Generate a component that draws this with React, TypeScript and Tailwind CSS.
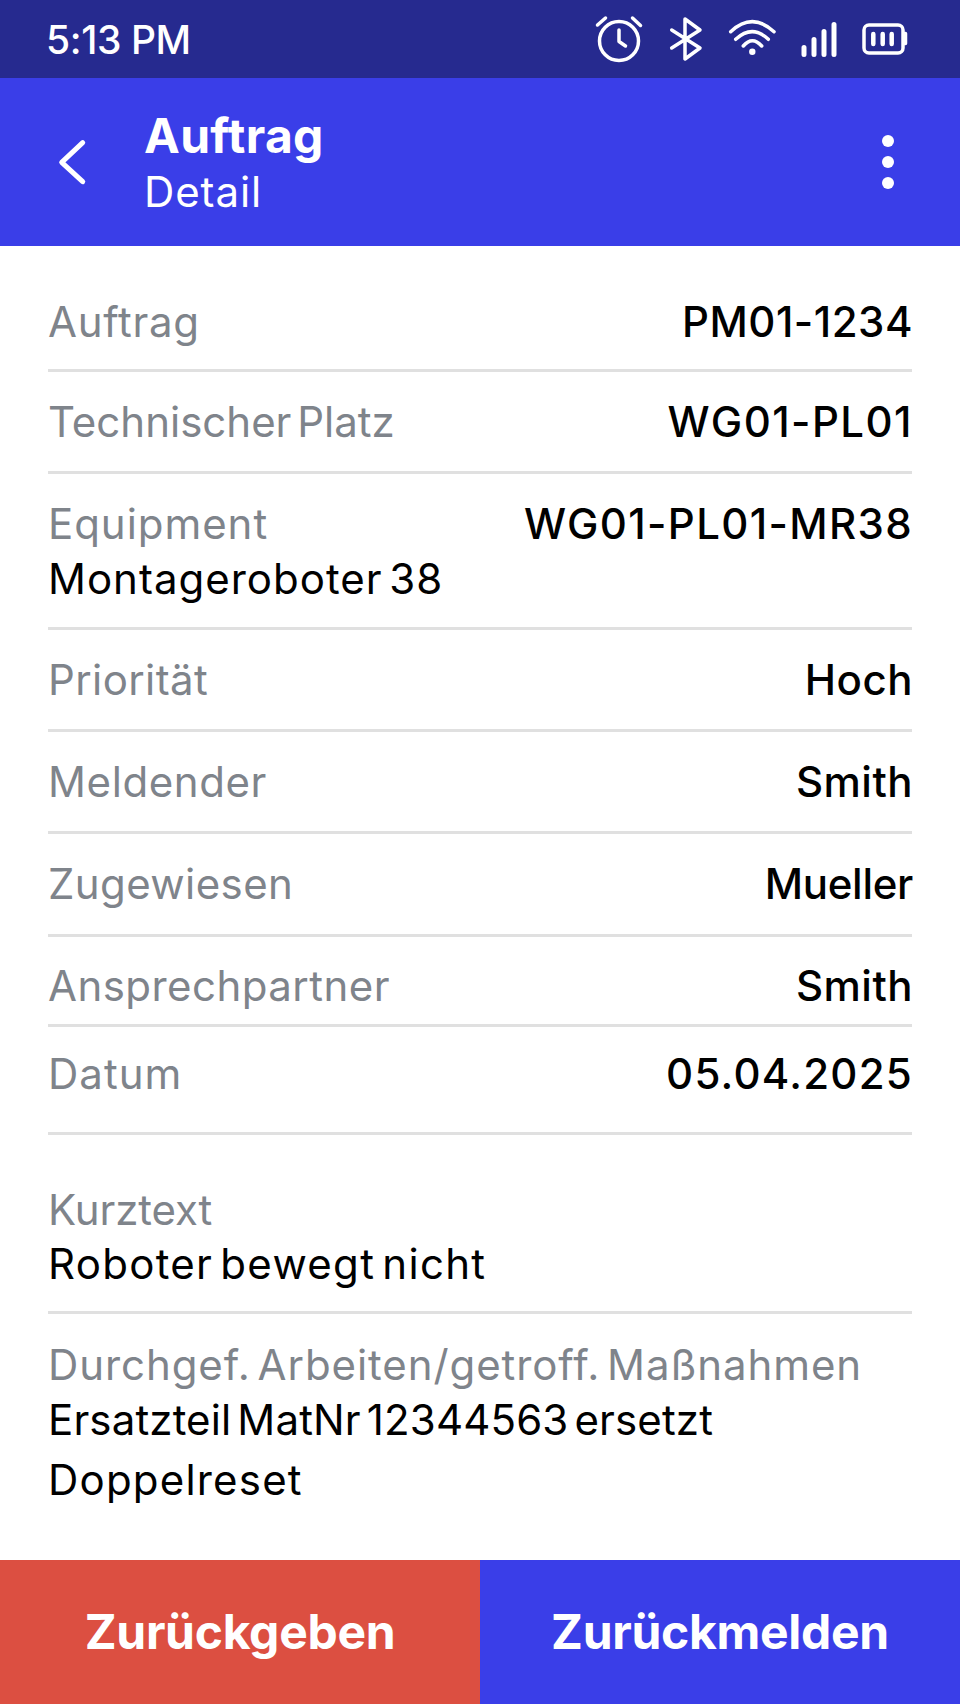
import React from "react";

type RowProps = { label: string; value: string; sub?: string; className: string; labelTrack?: string; valueTrack?: string; subTrack?: string };

function Row({ label, value, sub, className, labelTrack = "tracking-[0.6px]", valueTrack = "tracking-[0.5px]", subTrack = "tracking-[1px]" }: RowProps) {
  return (
    <div className={`border-b-[3px] border-[#e0e0e0] ${className}`}>
      <div className="flex items-center justify-between">
        <span className={`text-[42px] leading-[54px] text-[#7f848b] [word-spacing:-6px] ${labelTrack}`}>{label}</span>
        <span className={`mr-[-1px] text-[42px] leading-[54px] font-medium text-black ${valueTrack}`}>{value}</span>
      </div>
      {sub && <div className={`text-[42px] leading-[56px] text-black [word-spacing:-6px] ${subTrack}`}>{sub}</div>}
    </div>
  );
}

function StatusIcons() {
  const common = { fill: "none", stroke: "white", strokeWidth: 3.5, strokeLinecap: "round" as const, strokeLinejoin: "round" as const };
  return (
    <div className="flex items-center pr-[50px]">
      <svg width="50" height="48" viewBox="595 15 50 48" {...common}>
        <circle cx="619" cy="41" r="19.5" />
        <path d="M597.5 25L605.5 18M632.5 18L640.5 25.5" />
        <path d="M619 30V41.5L625.5 46" />
      </svg>
      <svg className="ml-[23px]" width="36" height="48" viewBox="668 15 36 48" {...common}>
        <path d="M671.7 30L700 48L685 59V19L700 30L671.7 48" />
      </svg>
      <svg className="ml-[24px]" width="50" height="48" viewBox="728 15 50 48" {...common}>
        <path d="M730.7 31.7Q752.3 11.7 774 31.7" />
        <path d="M735.7 39.3Q752.3 24 768.3 39.3" />
        <path d="M743.3 46Q752.3 35.4 761.7 46" />
        <circle cx="752.3" cy="51.7" r="3.2" fill="white" stroke="none" />
      </svg>
      <svg className="ml-[22px]" width="40" height="48" viewBox="800 15 40 48" {...common} strokeWidth={5}>
        <path d="M804 47.5V54.5M814 39.5V54.5M824 31.5V54.5M834 24.5V54.5" />
      </svg>
      <svg className="ml-[20px]" width="50" height="48" viewBox="860 15 50 48" {...common}>
        <rect x="864" y="25" width="39" height="28" rx="5" />
        <path d="M904 33.5H905.5V43.5H904" />
        <path d="M873.3 34V44M882.7 34V44M891.7 34V44" strokeWidth={4.5} />
      </svg>
    </div>
  );
}

export default function App() {
  return (
    <div className="flex h-[1704px] w-[960px] flex-col bg-white [font-family:Inter,sans-serif]">
      <div className="flex h-[78px] items-center justify-between bg-[#262a8f] pl-[46px] text-white">
        <span className="text-[39px] font-medium leading-none tracking-[-0.4px]">5:13 PM</span>
        <StatusIcons />
      </div>

      <div className="flex h-[168px] items-center bg-[#3a3ee8] pl-[48px] pr-[66px] text-white">
        <svg width="48" height="48" viewBox="48 138 48 48" fill="none" stroke="white" strokeWidth="5" strokeLinecap="round" strokeLinejoin="round">
          <path d="M82.7 142.7L61.7 162.3L82.7 181.7" />
        </svg>
        <div className="ml-[48px] flex flex-1 flex-col pt-[2px]">
          <span className="text-[48px] font-bold leading-[54px] tracking-[0.3px]">Auftrag</span>
          <span className="mt-[3px] text-[42px] leading-[52px] tracking-[0.9px]">Detail</span>
        </div>
        <svg width="12" height="54" viewBox="882 135 12 54" fill="white">
          <circle cx="888" cy="141" r="6" />
          <circle cx="888" cy="162" r="6" />
          <circle cx="888" cy="183" r="6" />
        </svg>
      </div>

      <div className="flex flex-1 flex-col px-[48px]">
        <Row label="Auftrag" value="PM01-1234" className="pt-[49px] pb-[20px]" labelTrack="tracking-[0.7px]" />
        <Row label="Technischer Platz" value="WG01-PL01" className="pt-[23px] pb-[22px]" labelTrack="tracking-[0px]" valueTrack="tracking-[1.45px]" />
        <Row label="Equipment" value="WG01-PL01-MR38" sub="Montageroboter 38" className="pt-[23px] pb-[20px]" labelTrack="tracking-[0.95px]" valueTrack="tracking-[1.35px]" subTrack="tracking-[1px]" />
        <Row label="Priorität" value="Hoch" className="pt-[23px] pb-[22px]" labelTrack="tracking-[0.4px]" />
        <Row label="Meldender" value="Smith" className="pt-[23px] pb-[22px]" />
        <Row label="Zugewiesen" value="Mueller" className="py-[23px]" labelTrack="tracking-[0.4px]" valueTrack="tracking-[-0.3px]" />
        <Row label="Ansprechpartner" value="Smith" className="pt-[22px] pb-[11px]" labelTrack="tracking-[0.45px]" />
        <Row label="Datum" value="05.04.2025" className="pt-[20px] pb-[31px]" labelTrack="tracking-[1px]" valueTrack="tracking-[1.25px]" />

        <div className="border-b-[3px] border-[#e0e0e0] pt-[48px] pb-[20px] text-[42px] [word-spacing:-6px]">
          <div className="leading-[54px] tracking-[-0.1px] text-[#7f848b]">Kurztext</div>
          <div className="leading-[54px] tracking-[1.3px] text-black">Roboter bewegt nicht</div>
        </div>

        <div className="pt-[26px] text-[42px] [word-spacing:-6px]">
          <div className="leading-[50px] tracking-[0.92px] text-[#7f848b]">Durchgef. Arbeiten/getroff. Maßnahmen</div>
          <div className="leading-[60px] tracking-[0.15px] text-black">Ersatzteil MatNr 12344563 ersetzt</div>
          <div className="leading-[60px] tracking-[1.2px] text-black">Doppelreset</div>
        </div>
      </div>

      <div className="flex h-[144px] text-white">
        <button className="flex w-1/2 items-center justify-center bg-[#dc4f41] text-[48px] font-bold tracking-[-0.3px]">Zurückgeben</button>
        <button className="flex w-1/2 items-center justify-center bg-[#3a3ee8] text-[48px] font-bold tracking-[-0.3px]">Zurückmelden</button>
      </div>
    </div>
  );
}
